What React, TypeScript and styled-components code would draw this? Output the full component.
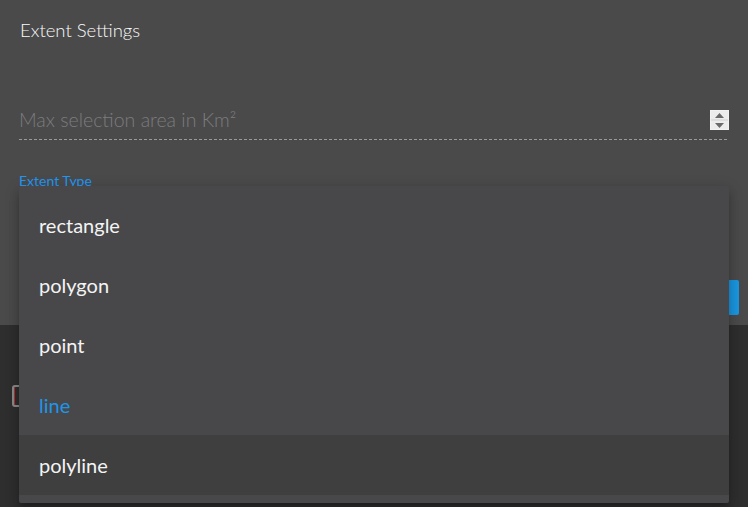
import styled, { createGlobalStyle } from 'styled-components';

const GlobalStyle = createGlobalStyle`
  html, body {
    margin: 0;
    padding: 0;
    background: #2e2e2e;
    font-family: Lato, 'Noto Sans', sans-serif;
  }
  #root {
    width: 748px;
    height: 507px;
    overflow: hidden;
  }
`;

const options = ['rectangle', 'polygon', 'point', 'line', 'polyline'];
const selected = 'line';
const hovered = 'polyline';

export default function App() {
  return (
    <>
      <GlobalStyle />
      <Page>
        <Panel>
          <Title>Extent Settings</Title>
          <Field>
            <Placeholder>Max selection area in Km²</Placeholder>
            <Spinner>
              <SpinHalf>
                <svg width="9" height="5" viewBox="0 0 9 5">
                  <path d="M0 5 L4.5 0 L9 5 Z" fill="#6a6a6a" />
                </svg>
              </SpinHalf>
              <SpinHalf>
                <svg width="9" height="5" viewBox="0 0 9 5">
                  <path d="M0 0 L9 0 L4.5 5 Z" fill="#6a6a6a" />
                </svg>
              </SpinHalf>
            </Spinner>
          </Field>
          <Label>Extent Type</Label>
          <Actions>
            <SaveButton>Save</SaveButton>
          </Actions>
        </Panel>
        <Footer>
          <Checkbox />
        </Footer>
        <Menu>
          {options.map((o) => (
            <MenuItem key={o} $selected={o === selected} $hover={o === hovered}>
              {o}
            </MenuItem>
          ))}
        </Menu>
      </Page>
    </>
  );
}

const Page = styled.div`
  position: relative;
  width: 748px;
  height: 507px;
  display: flex;
  flex-direction: column;
`;

const Panel = styled.div`
  height: 325px;
  box-sizing: border-box;
  background: #4a4a4b;
  padding: 18px 9px 0 19px;
  display: flex;
  flex-direction: column;
`;

const Title = styled.div`
  font-size: 18.5px;
  font-weight: 300;
  line-height: 24px;
  color: #fafafa;
  padding-left: 1px;
`;

const Field = styled.div`
  margin-top: 64px;
  margin-right: 10px;
  height: 34px;
  box-sizing: border-box;
  padding-bottom: 8px;
  display: flex;
  align-items: flex-end;
  justify-content: space-between;
  background-image: linear-gradient(to right, #9a9a9a 60%, transparent 60%);
  background-size: 5px 1px;
  background-repeat: repeat-x;
  background-position: left bottom;
`;

const Placeholder = styled.div`
  font-size: 19.5px;
  font-weight: 300;
  line-height: 24px;
  color: #7c7c7c;
`;

const Spinner = styled.div`
  width: 19px;
  height: 20px;
  margin-bottom: 2px;
  box-sizing: border-box;
  border: 1px solid #f2f2f2;
  background: #dedede;
  display: flex;
  flex-direction: column;
  gap: 2px;
`;

const SpinHalf = styled.div`
  flex: 1;
  background: #ececec;
  display: flex;
  align-items: center;
  justify-content: center;
`;

const Label = styled.div`
  margin-top: 32px;
  font-size: 14px;
  line-height: 18px;
  color: #2196f3;
`;

const Actions = styled.div`
  margin-top: 90px;
  display: flex;
  justify-content: flex-end;
`;

const SaveButton = styled.button`
  width: 90px;
  height: 35px;
  border: 0;
  border-radius: 2px;
  background: #1a96e0;
  color: #fff;
  font-family: Lato, sans-serif;
  font-size: 14px;
`;

const Footer = styled.div`
  flex: 1;
  background: #2e2e2e;
  padding: 60px 0 0 12px;
`;

const Checkbox = styled.div`
  width: 20px;
  height: 22px;
  box-sizing: border-box;
  border: 2px solid #8a8a8a;
  border-radius: 3px;
  box-shadow: inset 1px 0 0 #b03030;
`;

const Menu = styled.div`
  position: absolute;
  left: 19px;
  top: 186px;
  width: 710px;
  padding: 9px 0 8px;
  background: #48484a;
  border-radius: 2px;
  box-shadow: 0 8px 10px 1px rgba(0, 0, 0, 0.14), 0 3px 14px 2px rgba(0, 0, 0, 0.12),
    0 5px 5px -3px rgba(0, 0, 0, 0.2);
`;

const MenuItem = styled.div<{ $selected: boolean; $hover: boolean }>`
  height: 60px;
  display: flex;
  align-items: center;
  padding-left: 20px;
  font-size: 20px;
  color: ${(p) => (p.$selected ? '#1e96e8' : '#f4f4f4')};
  background: ${(p) => (p.$hover ? '#3f3f40' : 'transparent')};
`;
